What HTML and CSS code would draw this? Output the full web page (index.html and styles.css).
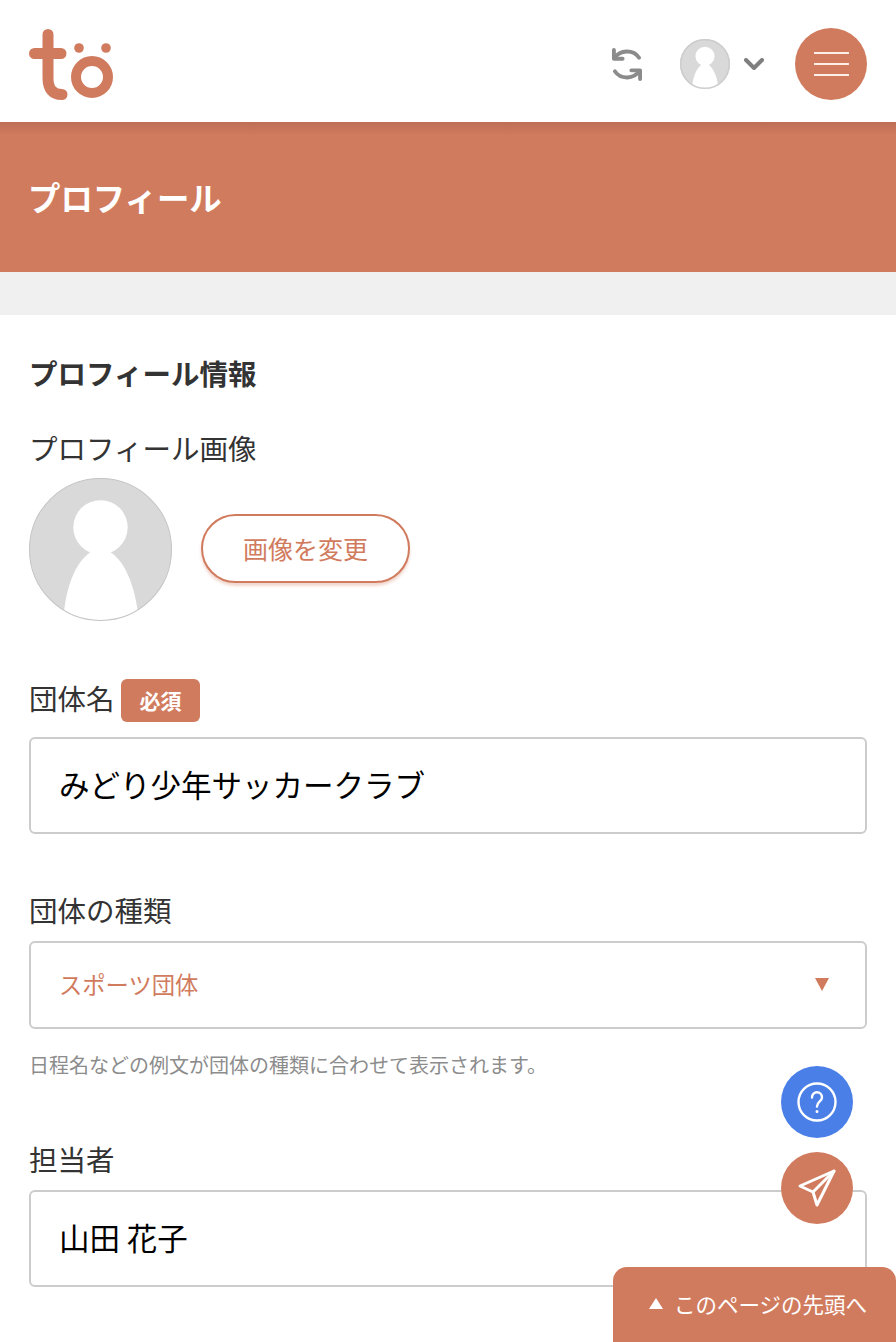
FILE: index.html
```html
<!DOCTYPE html>
<html lang="ja">
<head>
    <meta charset="UTF-8">
    <meta name="viewport" content="width=device-width, initial-scale=1.0">
    <title>プロフィール</title>
    <link rel="stylesheet" href="styles.css">
</head>
<body>
    <header class="header">
        <svg class="logo" viewBox="0 0 84 72" width="84" height="72">
            <path d="M5.500 25.500H32M19 6.500V50Q19 66.500 33 66.500" fill="none" stroke="#d17b5e" stroke-width="11" stroke-linecap="round"/>
            <circle cx="63" cy="49" r="16" fill="none" stroke="#d17b5e" stroke-width="10"/>
            <circle cx="50" cy="20" r="4.800" fill="#d17b5e"/>
            <circle cx="77" cy="20" r="4.800" fill="#d17b5e"/>
        </svg>
        <div class="header-right">
            <svg class="sync" viewBox="0 0 32 36" width="31" height="35" fill="none" stroke="#8b8b8b" stroke-width="4" stroke-linecap="round" stroke-linejoin="round">
                <path d="M3 3V12H12"/>
                <path d="M4 11C9 3 23 2 29 11"/>
                <path d="M30 33V24H21"/>
                <path d="M29 25C24 33 10 34 4 25"/>
            </svg>
            <button class="user-btn">
                <svg class="avatar-small" viewBox="0 0 142 142" width="50" height="50">
                    <use href="#person"/>
                    <circle cx="71" cy="71" r="69" fill="none" stroke="#cccccc" stroke-width="4"/>
                </svg>
                <svg viewBox="0 0 20 12" width="20" height="12" fill="none" stroke="#7f7f7f" stroke-width="4" stroke-linecap="round" stroke-linejoin="round">
                    <path d="M2 2L10 10L18 2"/>
                </svg>
            </button>
            <button class="menu-btn">
                <span></span><span></span><span></span>
            </button>
        </div>
    </header>

    <div class="title-band">
        <h1>プロフィール</h1>
    </div>
    <div class="gray-band"></div>

    <main class="content">
        <h2>プロフィール情報</h2>

        <div class="label image-label">プロフィール画像</div>
        <div class="image-row">
            <svg class="avatar" viewBox="0 0 142 142" width="143" height="143">
                <defs>
                    <g id="person">
                        <clipPath id="round"><circle cx="71" cy="71" r="70.500"/></clipPath>
                        <circle cx="71" cy="71" r="70.500" fill="#d9d9d9"/>
                        <g clip-path="url(#round)">
                            <circle cx="71" cy="49" r="27" fill="#fff"/>
                            <path d="M34 142C36 106 48 80 64 72H78C94 80 106 106 109 142Z" fill="#fff"/>
                        </g>
                        <circle cx="71" cy="71" r="70.500" fill="none" stroke="#c4c4c4" stroke-width="1"/>
                    </g>
                </defs>
                <use href="#person"/>
            </svg>
            <button class="change-btn">画像を変更</button>
        </div>

        <div class="field name-field">
            <div class="label">団体名<span class="required">必須</span></div>
            <div class="text-input">みどり少年サッカークラブ</div>
        </div>

        <div class="field type-field">
            <div class="label">団体の種類</div>
            <div class="select-input">
                スポーツ団体
                <span class="select-arrow"></span>
            </div>
            <p class="note">日程名などの例文が団体の種類に合わせて表示されます。</p>
        </div>

        <div class="field person-field">
            <div class="label">担当者</div>
            <div class="text-input">山田 花子</div>
        </div>
    </main>

    <button class="fab fab-help">
        <svg viewBox="0 0 40 40" width="40" height="40" fill="none" stroke="#fff" stroke-width="2.400" stroke-linecap="round">
            <circle cx="20" cy="20" r="18.500"/>
            <path d="M15 15.500C15 8.500 25 8.500 25 15.500C25 19.500 20 19.500 20 24.500"/>
            <circle cx="20" cy="29.500" r="0.800" fill="#fff" stroke-width="1.400"/>
        </svg>
    </button>
    <button class="fab fab-send">
        <svg viewBox="0 0 40 40" width="40" height="40" fill="none" stroke="#fff" stroke-width="3" stroke-linejoin="round" stroke-linecap="round">
            <path d="M37 3L3 18L16 24L20 37Z"/>
            <path d="M37 3L16 24"/>
        </svg>
    </button>
    <button class="page-top"><span class="page-top-mark"></span>このページの先頭へ</button>
</body>
</html>
```

FILE: styles.css
```css
* {
    box-sizing: border-box;
}
html, body {
    margin: 0;
    height: 1342px;
    overflow: hidden;
}
body {
    font-family: "Noto Sans CJK JP", "Noto Sans", sans-serif;
    background-color: white;
    color: #333;
}
button {
    font-family: inherit;
    padding: 0;
    border: none;
    background: none;
}

.header {
    height: 122px;
    padding: 6px 29px 0;
    display: flex;
    justify-content: space-between;
    align-items: center;
}
.logo {
    display: block;
}
.header-right {
    display: flex;
    align-items: center;
}
.sync {
    margin-right: 38px;
}
.user-btn {
    display: flex;
    align-items: center;
    gap: 14px;
    margin-right: 31px;
}
.avatar-small {
    display: block;
}
.menu-btn {
    width: 72px;
    height: 72px;
    border-radius: 50%;
    background-color: #d17b5e;
    display: flex;
    flex-direction: column;
    justify-content: center;
    align-items: center;
    gap: 9px;
}
.menu-btn span {
    display: block;
    width: 35px;
    height: 2px;
    background-color: #fdeee8;
}

.title-band {
    height: 150px;
    padding: 0 0 2px 28px;
    display: flex;
    align-items: center;
    background: linear-gradient(#bd6f55, #d17b5e 14px);
}
h1 {
    margin: 0;
    font-size: 32.400px;
    font-weight: 700;
    color: white;
}
.gray-band {
    height: 43px;
    background-color: #f0f0f0;
}

.content {
    padding: 37px 29px 0;
}
h2 {
    margin: 0;
    font-size: 28.500px;
    line-height: 42px;
    font-weight: 700;
}
.label {
    font-size: 28.500px;
    line-height: 42px;
    display: flex;
    align-items: flex-start;
}
.image-label {
    margin: 33px 0 9px;
}
.image-row {
    display: flex;
    align-items: center;
    gap: 29px;
}
.avatar {
    display: block;
}
.change-btn {
    width: 209px;
    height: 69px;
    margin-bottom: 2px;
    padding-bottom: 2px;
    border: 2px solid #d17b5e;
    border-radius: 35px;
    background-color: white;
    color: #d17b5e;
    font-size: 25px;
    box-shadow: 0 3px 3px rgba(209, 123, 94, 0.3);
}
.required {
    width: 79px;
    height: 43px;
    margin-left: 6.500px;
    border-radius: 6px;
    background-color: #d17b5e;
    color: white;
    font-size: 21px;
    font-weight: 700;
    line-height: 43px;
    text-align: center;
}
.name-field {
    margin-top: 58px;
}
.name-field .label {
    line-height: 37px;
    margin-bottom: 15px;
}
.type-field {
    margin-top: 55px;
}
.person-field {
    margin-top: 58px;
}
.type-field .label, .person-field .label {
    margin-bottom: 10px;
}
.text-input {
    height: 97px;
    padding: 0 0 3px 28px;
    border: 2px solid #ccc;
    border-radius: 6px;
    font-size: 30.500px;
    color: #000;
    display: flex;
    align-items: center;
}
.select-input {
    height: 88px;
    padding: 0 36px 2px 28px;
    border: 2px solid #ccc;
    border-radius: 6px;
    font-size: 23.300px;
    color: #d17b5e;
    display: flex;
    justify-content: space-between;
    align-items: center;
}
.select-arrow {
    width: 0;
    height: 0;
    border-left: 7px solid transparent;
    border-right: 7px solid transparent;
    border-top: 13px solid #d17b5e;
}
.note {
    margin: 21px 0 0;
    font-size: 20px;
    line-height: 30px;
    color: #8c8c8c;
}

.fab {
    position: fixed;
    right: 43px;
    width: 72px;
    height: 72px;
    border-radius: 50%;
    display: flex;
    justify-content: center;
    align-items: center;
}
.fab-help {
    top: 1066px;
    background-color: #4a7fe8;
}
.fab-send {
    top: 1152px;
    background-color: #d17b5e;
}
.page-top {
    position: fixed;
    right: 0;
    bottom: 0;
    width: 283px;
    height: 75px;
    padding: 0 29px 2px 0;
    border-radius: 14px 14px 0 0;
    background-color: #d17b5e;
    color: white;
    font-size: 21.500px;
    display: flex;
    justify-content: flex-end;
    align-items: center;
}
.page-top-mark {
    width: 0;
    height: 0;
    margin-right: 11px;
    border-left: 7px solid transparent;
    border-right: 7px solid transparent;
    border-bottom: 11px solid white;
}
```
